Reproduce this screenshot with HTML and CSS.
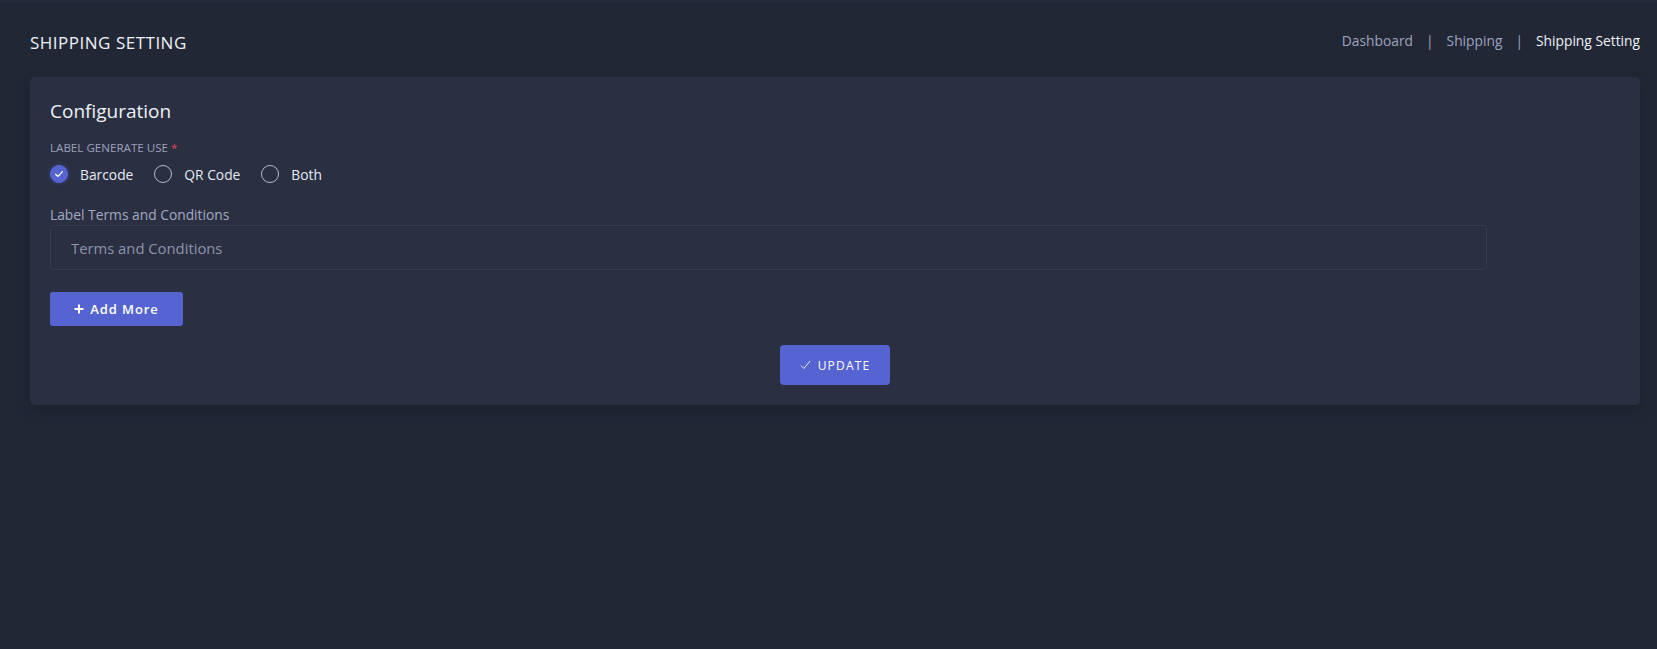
FILE: index.html
```html
<!DOCTYPE html>
<html lang="en">
<head>
<meta charset="utf-8">
<title>Shipping Setting</title>
<link rel="stylesheet" href="styles.css">
</head>
<body>
<div class="topstrip"></div>
<main class="page">
  <div class="page-title-row">
    <h4 class="page-title">SHIPPING SETTING</h4>
    <ol class="breadcrumb">
      <li class="crumb">Dashboard</li>
      <li class="sep">|</li>
      <li class="crumb">Shipping</li>
      <li class="sep">|</li>
      <li class="crumb active">Shipping Setting</li>
    </ol>
  </div>
  <section class="card">
    <h4 class="card-title">Configuration</h4>
    <div class="field-label upper">LABEL GENERATE USE <span class="req">*</span></div>
    <div class="radios">
      <label class="radio"><span class="dot checked"><svg width="10" height="10" viewBox="0 0 10 10"><path d="M1.6 5.2 L4 7.4 L8.4 2.6" fill="none" stroke="#fff" stroke-width="1.3" stroke-linecap="round" stroke-linejoin="round"/></svg></span>Barcode</label>
      <label class="radio"><span class="dot"></span>QR Code</label>
      <label class="radio"><span class="dot"></span>Both</label>
    </div>
    <div class="field-label terms-label">Label Terms and Conditions</div>
    <div class="row">
      <div class="col-11"><div class="input">Terms and Conditions</div></div>
    </div>
    <button class="btn btn-add"><svg width="10" height="10" viewBox="0 0 10 10"><path d="M5 0.5 V9.5 M0.5 5 H9.5" stroke="#fff" stroke-width="2"/></svg>Add More</button>
    <div class="actions">
      <button class="btn btn-update"><svg width="11" height="10" viewBox="0 0 11 10"><path d="M1 5.5 L3.8 8.5 L10 1" fill="none" stroke="#e6e9f5" stroke-width="1"/></svg>UPDATE</button>
    </div>
  </section>
</main>
</body>
</html>
```
FILE: styles.css
```css
* { box-sizing: border-box; }
html, body { margin: 0; padding: 0; }
body {
  background: #222736;
  font-family: "Open Sans", "Liberation Sans", sans-serif;
  color: #eff2f7;
  height: 649px;
  overflow: hidden;
}
.topstrip {
  height: 3px;
  background: #272c3d;
}
.page {
  padding: 0 17px 0 30px;
}
.page-title-row {
  display: flex;
  justify-content: space-between;
  align-items: center;
  height: 74px;
}
.page-title {
  margin: 4px 0 0 0;
  font-size: 17px;
  font-weight: 500;
  letter-spacing: 0.5px;
  color: #eff2f7;
}
.breadcrumb {
  list-style: none;
  margin: 0;
  padding: 0;
  display: flex;
  gap: 13px;
  font-size: 13.8px;
  color: #9ca4bd;
}
.breadcrumb .active { color: #eff2f7; }
.breadcrumb .sep { color: #9ca4bd; }
.card {
  background: #2a2f42;
  border-radius: 5px;
  padding: 21px 20px 20px 20px;
  height: 328px;
  box-shadow: 0 6px 12px rgba(20, 22, 32, 0.35);
}
.card-title {
  margin: 0 0 16px 0;
  font-size: 19px;
  font-weight: 500;
  color: #eff2f7;
}
.field-label {
  font-size: 11.6px;
  color: #9aa2ba;
}
.req { color: #e03f5a; }
.radios {
  display: flex;
  gap: 21px;
  margin-top: 9px;
  height: 20px;
  align-items: center;
}
.radio {
  display: flex;
  align-items: center;
  gap: 12px;
  font-size: 13.8px;
  color: #e6e9f2;
}
.dot {
  width: 18px;
  height: 18px;
  border-radius: 50%;
  border: 1px solid #b4bbcf;
  display: flex;
  align-items: center;
  justify-content: center;
}
.dot.checked {
  background: #5664d2;
  border-color: #5664d2;
  box-shadow: 0 0 4px rgba(86, 100, 210, 0.5);
}
.terms-label {
  margin-top: 21px;
  font-size: 13.8px;
  color: #a3aac0;
}
.row {
  display: flex;
  margin: 1px -12px 0 -12px;
}
.col-11 {
  flex: 0 0 91.6667%;
  padding: 0 12px;
}
.input {
  height: 45px;
  border: 1px solid #353b50;
  border-radius: 4px;
  padding: 0 20px;
  display: flex;
  align-items: center;
  font-size: 14.8px;
  color: #8d94aa;
}
.btn {
  border: none;
  background: #5664d2;
  color: #fff;
  font-family: inherit;
  border-radius: 3px;
  display: flex;
  align-items: center;
  justify-content: center;
  cursor: pointer;
}
.btn-add {
  margin-top: 22px;
  width: 133px;
  height: 34px;
  font-size: 13px;
  font-weight: 600;
  letter-spacing: 0.9px;
  gap: 6px;
}
.actions {
  display: flex;
  justify-content: center;
  margin-top: 19px;
}
.btn-update {
  width: 110px;
  height: 40px;
  font-size: 12px;
  font-weight: 500;
  letter-spacing: 1.2px;
  gap: 7px;
  border-radius: 4px;
}
```
